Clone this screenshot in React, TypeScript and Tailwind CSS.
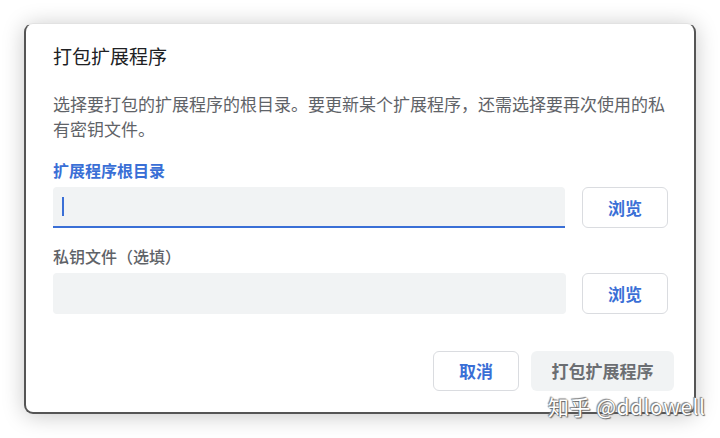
import React from "react";

const font = { fontFamily: '"Noto Sans CJK SC", "Noto Sans", sans-serif' };

const BrowseButton: React.FC = () => (
  <button className="w-[86px] h-[41px] shrink-0 rounded-[6px] border border-[#dadce0] bg-white text-[17px] font-semibold text-[#3a6fd6]">
    浏览
  </button>
);

const App: React.FC = () => {
  return (
    <div className="relative w-[720px] h-[438px] bg-white overflow-hidden pt-[23px] pl-[24px]" style={font}>
      <div className="w-[672px] h-[391px] rounded-[9px] bg-white border-x-2 border-b-2 border-t border-x-[#555] border-b-[#555] border-t-[#e2e2e2] shadow-[0_2px_22px_rgba(0,0,0,0.22)] pl-[27px] pt-[20px]">
        <h1 className="text-[19px] leading-[24px] text-[#202124]">打包扩展程序</h1>

        <p className="mt-[23px] text-[17px] leading-[25px] text-[#5f6368] whitespace-nowrap">
          选择要打包的扩展程序的根目录。要更新某个扩展程序，还需选择要再次使用的私
          <br />
          有密钥文件。
        </p>

        <div className="mt-[19px] text-[16px] leading-[20px] font-semibold text-[#3a6fd6]">扩展程序根目录</div>
        <div className="mt-[7px] flex gap-[17px]">
          <div className="relative w-[512px] h-[41px] rounded-t-[4px] bg-[#f1f3f4] border-b-2 border-[#3a6fd6] flex items-center pl-[9px]">
            <span className="block w-[2px] h-[19px] bg-[#3a6fd6]" />
          </div>
          <BrowseButton />
        </div>

        <div className="mt-[18px] text-[16px] leading-[20px] font-medium text-[#5f6368]">私钥文件（选填）</div>
        <div className="mt-[7px] flex gap-[16px]">
          <div className="w-[513px] h-[41px] rounded-[4px] bg-[#f1f3f4]" />
          <BrowseButton />
        </div>

        <div className="mt-[37px] flex justify-end gap-[12px] pr-[20px]">
          <button className="w-[86px] h-[40px] rounded-[6px] border border-[#dadce0] bg-white text-[17px] font-semibold text-[#3a6fd6]">
            取消
          </button>
          <button className="w-[143px] h-[40px] rounded-[6px] bg-[#f1f3f4] text-[17px] font-semibold text-[#6b6e72]">
            打包扩展程序
          </button>
        </div>
      </div>

      <div
        className="absolute left-[548px] top-[393px] text-[21px] leading-[27px] tracking-[0.5px] text-white whitespace-nowrap"
        style={{ textShadow: "0 0 1px #555, 1px 1px 1px #666, -1px -1px 1px #888" }}
      >
        知乎 @ddlowell
      </div>
    </div>
  );
};

export default App;
